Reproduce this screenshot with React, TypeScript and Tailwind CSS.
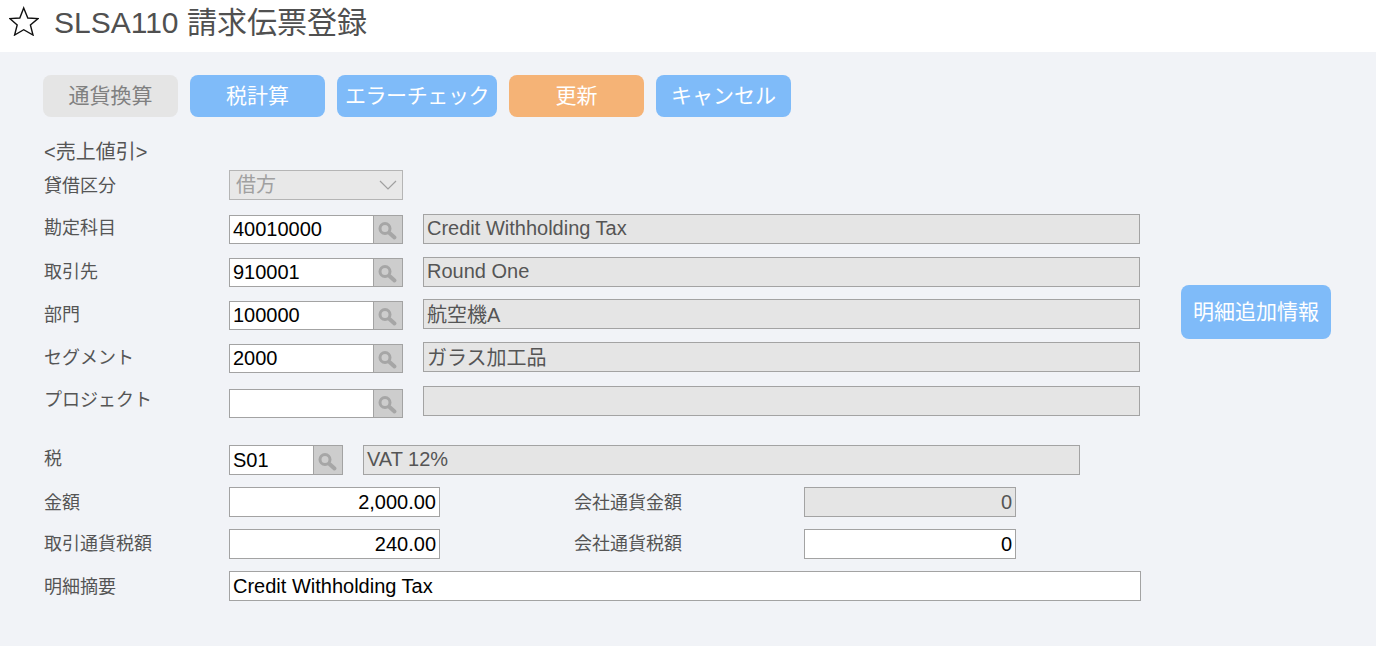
import type { ReactNode } from 'react'

const FONT = "font-['Liberation_Sans','Noto_Sans_CJK_JP',sans-serif]"

const boxCls = 'box-border border border-[#a3a3a3] text-[20px] leading-[26px] px-[3px]'

function SearchIcon() {
  return (
    <svg width="22" height="22" viewBox="0 0 22 22" fill="none">
      <circle cx="8" cy="9.5" r="5" stroke="#a6a6a6" strokeWidth="3" />
      <path d="M12.5 14L17.5 18.5" stroke="#a6a6a6" strokeWidth="4" strokeLinecap="round" />
    </svg>
  )
}

function Btn({ label, width, color }: { label: string; width: string; color: string }) {
  return (
    <div className={`flex h-[42px] items-center justify-center rounded-[8px] text-[21px] whitespace-nowrap ${width} ${color}`}>
      {label}
    </div>
  )
}

function Row({ label, top, labelTop, children }: { label: string; top: string; labelTop: string; children: ReactNode }) {
  return (
    <div className={`flex h-[30px] items-start ${top}`}>
      <div className={`w-[185px] shrink-0 text-[18px] leading-[26px] text-[#555] ${labelTop}`}>{label}</div>
      {children}
    </div>
  )
}

function CodeField({ value, width = 'w-[145px]', top = 'mt-px', height = 'h-[29px]' }: { value: string; width?: string; top?: string; height?: string }) {
  return (
    <div className={`flex ${top}`}>
      <div className={`${boxCls} ${height} ${width} bg-white text-black`}>{value}</div>
      <div className={`box-border flex ${height} w-[30px] -ml-px items-center justify-center border border-[#a3a3a3] bg-[#cdcdcd]`}>
        <SearchIcon />
      </div>
    </div>
  )
}

function NameField({ value, width = 'w-[717px]', pad = '' }: { value: string; width?: string; pad?: string }) {
  return <div className={`${boxCls} h-[30px] ml-[20px] ${width} ${pad} bg-[#e5e5e5] text-[#555]`}>{value}</div>
}

function Amount({ value, readOnly }: { value: string; readOnly?: boolean }) {
  return (
    <div className={`${boxCls} h-[30px] pt-px text-right ${readOnly ? 'bg-[#e5e5e5] text-[#555]' : 'bg-white text-black'}`}>{value}</div>
  )
}

export default function App() {
  return (
    <div className={`flex min-h-[646px] flex-col bg-[#f1f3f7] ${FONT}`}>
      <header className="flex h-[52px] items-center bg-white pb-[6px] pl-[9px]">
        <svg className="mb-[4px]" width="30" height="30" viewBox="0 0 30 30" fill="none">
          <path
            d="M14.7 2L18.8 12L29 12.6L21.4 19L24 29L14.7 23.7L5.6 29L8.2 19L0.8 12.6L10.8 12Z"
            stroke="#111"
            strokeWidth="1.4"
            strokeLinejoin="miter"
          />
        </svg>
        <h1 className="ml-[15px] text-[30px] leading-none text-[#505050]">SLSA110 請求伝票登録</h1>
      </header>

      <main className="pl-[44px] pt-[23px]">
        <div className="-ml-px flex gap-[12px]">
          <Btn label="通貨換算" width="w-[135px]" color="bg-[#e5e5e5] text-[#808080]" />
          <Btn label="税計算" width="w-[135px]" color="bg-[#7fbbf9] text-white" />
          <Btn label="エラーチェック" width="w-[160px] tracking-[-0.4px]" color="bg-[#7fbbf9] text-white" />
          <Btn label="更新" width="w-[135px]" color="bg-[#f5b376] text-white" />
          <Btn label="キャンセル" width="w-[135px]" color="bg-[#7fbbf9] text-white" />
        </div>

        <div className="mt-[22px] text-[20px] leading-[26px] text-[#555]">&lt;売上値引&gt;</div>

        <div className="flex">
          <div className="w-[1097px] shrink-0">
            <Row label="貸借区分" top="mt-[5px]" labelTop="mt-[3px]">
              <div className="box-border flex h-[30px] w-[174px] items-center justify-between border border-[#b5b5b5] bg-[#e8e8e8] pl-[6px] pr-[5px] text-[20px] text-[#a0a0a0]">
                借方
                <svg width="18" height="10" viewBox="0 0 18 10" fill="none">
                  <path d="M1 1L9 9L17 1" stroke="#a0a0a0" strokeWidth="1.2" />
                </svg>
              </div>
            </Row>
            <Row label="勘定科目" top="mt-[14px]" labelTop="mt-px">
              <CodeField value="40010000" />
              <NameField value="Credit Withholding Tax" />
            </Row>
            <Row label="取引先" top="mt-[13px]" labelTop="mt-[2px]">
              <CodeField value="910001" />
              <NameField value="Round One" />
            </Row>
            <Row label="部門" top="mt-[12px]" labelTop="mt-[3px]">
              <CodeField value="100000" top="mt-[2px]" />
              <NameField value="航空機A" pad="pt-[2px]" />
            </Row>
            <Row label="セグメント" top="mt-[13px]" labelTop="mt-[3px]">
              <CodeField value="2000" top="mt-[2px]" />
              <NameField value="ガラス加工品" pad="pt-[2px]" />
            </Row>
            <Row label="プロジェクト" top="mt-[14px]" labelTop="mt-px">
              <CodeField value="" top="mt-[3px]" />
              <NameField value="" />
            </Row>
          </div>
          <div className="ml-[40px] mt-[120px] flex h-[54px] w-[150px] items-center justify-center rounded-[8px] bg-[#7fbbf9] text-[21px] text-white">
            明細追加情報
          </div>
        </div>

        <Row label="税" top="mt-[29px]" labelTop="mt-px">
          <CodeField value="S01" width="w-[85px]" top="" height="h-[30px] pt-px" />
          <NameField value="VAT 12%" />
        </Row>
        <Row label="金額" top="mt-[12px]" labelTop="mt-[3px]">
          <div className="w-[211px]">
            <Amount value="2,000.00" />
          </div>
          <div className="ml-[134px] mt-[3px] w-[230px] text-[18px] leading-[26px] text-[#555]">会社通貨金額</div>
          <div className="w-[212px]">
            <Amount value="0" readOnly />
          </div>
        </Row>
        <Row label="取引通貨税額" top="mt-[12px]" labelTop="mt-[2px]">
          <div className="w-[211px]">
            <Amount value="240.00" />
          </div>
          <div className="ml-[134px] mt-[2px] w-[230px] text-[18px] leading-[26px] text-[#555]">会社通貨税額</div>
          <div className="w-[212px]">
            <Amount value="0" />
          </div>
        </Row>
        <Row label="明細摘要" top="mt-[12px]" labelTop="mt-[3px]">
          <div className={`${boxCls} h-[30px] pt-px w-[912px] bg-white text-black`}>Credit Withholding Tax</div>
        </Row>
      </main>
    </div>
  )
}
